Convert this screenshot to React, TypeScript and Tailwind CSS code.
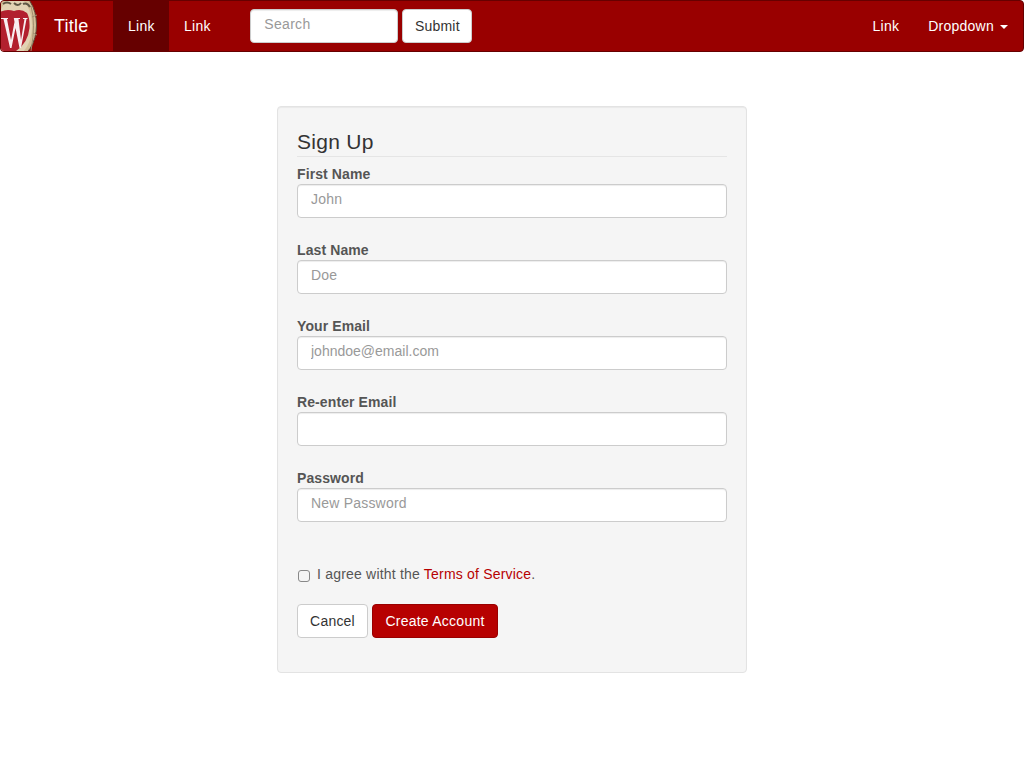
import React from "react";

const FONT = "font-['Liberation_Sans',Arial,sans-serif]";

const Crest = () => (
  <svg width="38" height="50" viewBox="0 0 38 50" className="block">
    <rect width="38" height="50" fill="#990000" />
    <ellipse cx="15" cy="24" rx="21.5" ry="33" fill="#d4bf98" stroke="#5e4f3e" strokeWidth="1" />
    <ellipse cx="15" cy="25" rx="17" ry="29" fill="#e2d3b4" />
    <path d="M31 5 Q36 22 31 50" fill="none" stroke="#a08e70" strokeWidth="1" />
    <path d="M32 16 L37 14 M33 32 L37 34" stroke="#a08e70" strokeWidth="1" />
    <path d="M3 3 Q7 0 11 3 M14 2 Q18 6 21 2 M23 3 Q27 1 30 6" fill="none" stroke="#5f5846" strokeWidth="2" />
    <path d="M-2 12 Q6 7 14 10 Q21 7 27 12 Q30 17 29.500 27 Q28 42 16 50 L-2 50 Z" fill="#b2202e" />
    <path d="M1 17 L8 17 L8 18 L7 18 L11 39 L14.500 21 L13.800 17 L20 17 L20 18 L18.500 18 L21 39 L24.500 18 L23 18 L23 17 L27.500 17 L27.500 18 L26.500 18 L21 47 L19.500 47 L15.500 27 L11.500 47 L10 47 L3.500 18 L1 18 Z" fill="#f8eef0" />
  </svg>
);

const Field = ({ label, placeholder, type = "text" }: { label: string; placeholder?: string; type?: string }) => (
  <div className="mb-[22px]">
    <label className="block h-[20px] text-[14px] leading-[20px] font-bold tracking-[0.1px] text-[#555555]">{label}</label>
    <input
      type={type}
      placeholder={placeholder}
      className={`block h-[34px] w-full rounded-[4px] border border-[#cccccc] bg-white px-[13px] pb-[4px] text-[14px] text-[#555555] shadow-[inset_0_1px_1px_rgba(0,0,0,0.075)] outline-none placeholder:text-[#999999] ${type === "email" ? "tracking-normal" : "tracking-[0.2px]"}`}
    />
  </div>
);

export default function App() {
  return (
    <div className={`${FONT} min-h-[768px] bg-white text-[14px] text-[#333333]`}>
      <nav className="flex h-[52px] items-stretch overflow-hidden rounded-[4px] border border-[#660000] bg-[#990000] text-white">
        <a className="-ml-px w-[39px] shrink-0 overflow-hidden"><Crest /></a>
        <a className="ml-[15px] flex items-center text-[18px] tracking-[0.2px] text-white">Title</a>
        <a className="ml-[25px] flex w-[56px] items-center justify-center bg-[#660000] tracking-[0.25px]">Link</a>
        <a className="flex w-[56px] items-center justify-center tracking-[0.25px]">Link</a>
        <form className="ml-[25px] flex items-start gap-[4px] pt-[8px]">
          <input
            placeholder="Search"
            className="h-[34px] w-[148px] rounded-[4px] border border-[#cccccc] bg-white px-[13px] pb-[4px] text-[14px] tracking-[0.3px] text-[#555555] shadow-[inset_0_1px_1px_rgba(0,0,0,0.075)] outline-none placeholder:text-[#999999]"
          />
          <button type="button" className="h-[34px] w-[70px] rounded-[4px] border border-[#cccccc] bg-white text-[14px] tracking-[0.2px] text-[#333333]">Submit</button>
        </form>
        <div className="ml-auto flex items-center text-[14px] tracking-[0.25px]">
          <a className="pr-[15px] pl-[14px]">Link</a>
          <a className="flex items-center pr-[15px] pl-[14px]">
            Dropdown
            <span className="mt-[2px] ml-[6px] h-0 w-0 border-x-[4px] border-t-[4px] border-x-transparent border-t-white" />
          </a>
        </div>
      </nav>

      <div className="mx-auto mt-[54px] h-[567px] w-[470px] rounded-[4px] border border-[#e3e3e3] bg-[#f5f5f5] px-[19px] pt-[19px] shadow-[inset_0_1px_1px_rgba(0,0,0,0.05)]">
        <h2 className="h-[31px] border-b border-[#e5e5e5] text-[21px] leading-[32px] font-normal tracking-[0.3px] text-[#333333]">Sign Up</h2>
        <form className="pt-[7px]">
          <Field label="First Name" placeholder="John" />
          <Field label="Last Name" placeholder="Doe" />
          <Field label="Your Email" placeholder="johndoe@email.com" type="email" />
          <Field label="Re-enter Email" type="email" />
          <Field label="Password" placeholder="New Password" type="password" />
          <label className="mt-[42px] flex h-[20px] items-center text-[14px] tracking-[0.2px] text-[#555555]">
            <input type="checkbox" className="mt-[3px] ml-[1px] h-[12px] w-[12px] appearance-none rounded-[3px] border border-[#888888] bg-[#f4f4f4]" />
            <span className="ml-[7px]">I agree witht the <a className="text-[#b70101]">Terms of Service</a>.</span>
          </label>
          <div className="mt-[20px] flex gap-[4px]">
            <button type="button" className="h-[34px] w-[71px] rounded-[4px] border border-[#cccccc] bg-white text-[14px] tracking-[0.2px] text-[#333333]">Cancel</button>
            <button type="button" className="h-[34px] w-[126px] rounded-[4px] border border-[#990000] bg-[#b70101] text-[14px] tracking-[0.25px] text-white">Create Account</button>
          </div>
        </form>
      </div>
    </div>
  );
}
